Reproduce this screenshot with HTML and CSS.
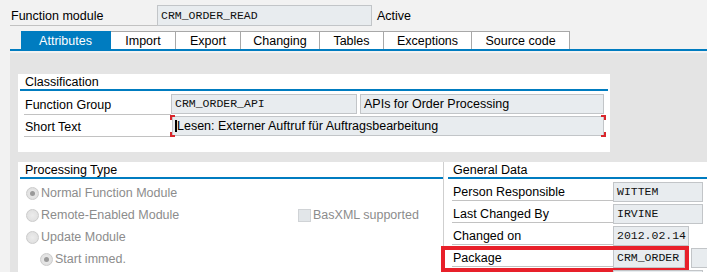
FILE: index.html
```html
<!DOCTYPE html>
<html lang="en">
<head>
    <meta charset="UTF-8">
    <title>Function Builder - Display CRM_ORDER_READ</title>
    <link rel="stylesheet" href="styles.css">
</head>
<body>
    <div class="header">
        <div class="head-label">Function module</div>
        <div class="field mono head-field">CRM_ORDER_READ</div>
        <div class="status">Active</div>
    </div>

    <div class="tab-buttons">
        <div class="tab-button active" style="width: 90px">Attributes</div>
        <div class="tab-button" style="width: 65px">Import</div>
        <div class="tab-button" style="width: 65px">Export</div>
        <div class="tab-button" style="width: 79px">Changing</div>
        <div class="tab-button" style="width: 64px">Tables</div>
        <div class="tab-button" style="width: 88px">Exceptions</div>
        <div class="tab-button" style="width: 98px">Source code</div>
    </div>

    <div class="panel">
        <div class="box classification">
            <div class="box-title">Classification</div>
            <div class="rows">
                <div class="row">
                    <div class="row-label">Function Group</div>
                    <div class="field mono fg-field">CRM_ORDER_API</div>
                    <div class="field fg-text">APIs for Order Processing</div>
                </div>
                <div class="row">
                    <div class="row-label">Short Text</div>
                    <div class="field short-field"><span class="caret"></span>Lesen: Externer Auftruf für Auftragsbearbeitung</div>
                </div>
            </div>
        </div>

        <div class="box lower">
            <div class="section processing">
                <div class="box-title">Processing Type</div>
                <div class="options">
                    <div class="option">
                        <span class="radio checked"></span>Normal Function Module
                    </div>
                    <div class="option">
                        <div class="option-main"><span class="radio"></span>Remote-Enabled Module</div>
                        <div class="check-item"><span class="checkbox"></span>BasXML supported</div>
                    </div>
                    <div class="option">
                        <span class="radio"></span>Update Module
                    </div>
                    <div class="option sub">
                        <span class="radio checked"></span>Start immed.
                    </div>
                </div>
            </div>

            <div class="section general">
                <div class="box-title">General Data</div>
                <div class="gd-rows">
                    <div class="gd-row">
                        <div class="gd-label">Person Responsible</div>
                        <div class="field mono" style="width: 90px">WITTEM</div>
                    </div>
                    <div class="gd-row">
                        <div class="gd-label">Last Changed By</div>
                        <div class="field mono" style="width: 90px">IRVINE</div>
                    </div>
                    <div class="gd-row">
                        <div class="gd-label">Changed on</div>
                        <div class="field mono" style="width: 76px">2012.02.14</div>
                    </div>
                    <div class="gd-row">
                        <div class="gd-label">Package</div>
                        <div class="field mono" style="width: 72px">CRM_ORDER</div>
                        <div class="field extra"></div>
                        <div class="highlight"></div>
                    </div>
                    <div class="gd-row">
                        <div class="gd-label"></div>
                        <div class="field mono" style="width: 90px"></div>
                    </div>
                </div>
            </div>
        </div>
    </div>
</body>
</html>
```

FILE: styles.css
```css
body {
    margin: 0;
    width: 707px;
    height: 272px;
    overflow: hidden;
    background-color: #f2f2f2;
    font-family: "Liberation Sans", Arial, sans-serif;
    font-size: 12.5px;
    color: #000;
}

/* input-like display fields */
.field {
    box-sizing: border-box;
    height: 20px;
    line-height: 18px;
    padding-left: 3px;
    background-color: #e8ecef;
    border: 1px solid #c2c5c8;
    white-space: nowrap;
    overflow: hidden;
}
.mono {
    font-family: "Liberation Mono", "Courier New", monospace;
    font-size: 11.5px;
    color: #111;
}

/* header */
.header {
    display: flex;
    padding: 5px 0 0 10px;
}
.head-label {
    box-sizing: border-box;
    width: 147px;
    height: 21px;
    line-height: 22px;
    padding-left: 1px;
    border-bottom: 1px solid #c2c2c2;
}
.head-field {
    width: 215px;
    height: 21px;
    line-height: 19px;
}
.status {
    margin-left: 5px;
    line-height: 22px;
}

/* tabs */
.tab-buttons {
    display: flex;
    margin: 4px 0 0 10px;
    padding-left: 11px;
    border-bottom: 2px solid #007cc0;
}
.tab-button {
    box-sizing: border-box;
    height: 18px;
    line-height: 18px;
    text-align: center;
    background-color: #fff;
    border-top: 1px solid #a8a8a8;
    border-right: 1px solid #a8a8a8;
}
.tab-button.active {
    background-color: #007cc0;
    border-color: #007cc0;
    color: #fff;
}

/* tab body */
.panel {
    margin: 2px 0 0 10px;
    padding: 21px 0 0 8px;
    height: 199px;
    background-color: #e4e4e4;
}
.box {
    background-color: #fff;
}
.box-title {
    height: 15px;
    line-height: 16px;
    padding-left: 5px;
    border-bottom: 2px solid #007cc0;
}

.classification {
    width: 592px;
    height: 78px;
    padding: 0 2px;
    box-sizing: border-box;
    margin-bottom: 10px;
}
.rows {
    padding: 2px 0 0 4px;
}
.row {
    display: flex;
    align-items: flex-start;
    height: 22px;
}
.row-label {
    box-sizing: border-box;
    width: 147px;
    height: 22px;
    padding: 4px 0 0 1px;
    line-height: 17px;
    border-bottom: 1px solid #c2c2c2;
}
.row .field {
    margin-top: 1px;
}
.fg-field {
    width: 186px;
}
.fg-text {
    width: 244px;
    margin-left: 3px;
}
.short-field {
    position: relative;
    width: 432px;
    margin-left: 1px;
    padding-left: 2px;
    overflow: visible;
}
/* red required-entry corner marks */
.short-field::before,
.short-field::after {
    content: "";
    position: absolute;
    top: -2px;
    bottom: -2px;
    width: 5px;
    background:
        linear-gradient(#d9262c, #d9262c) top / 100% 2px no-repeat,
        linear-gradient(#d9262c, #d9262c) bottom / 100% 2px no-repeat;
}
.short-field::before {
    left: -3px;
    background:
        linear-gradient(#d9262c, #d9262c) left top / 5px 2px no-repeat,
        linear-gradient(#d9262c, #d9262c) left top / 2px 5px no-repeat,
        linear-gradient(#d9262c, #d9262c) left bottom / 5px 2px no-repeat,
        linear-gradient(#d9262c, #d9262c) left bottom / 2px 5px no-repeat;
}
.short-field::after {
    right: -3px;
    background:
        linear-gradient(#d9262c, #d9262c) right top / 5px 2px no-repeat,
        linear-gradient(#d9262c, #d9262c) right top / 2px 5px no-repeat,
        linear-gradient(#d9262c, #d9262c) right bottom / 5px 2px no-repeat,
        linear-gradient(#d9262c, #d9262c) right bottom / 2px 5px no-repeat;
}
.caret {
    display: inline-block;
    width: 2px;
    height: 12px;
    vertical-align: -2px;
    background-color: #000;
}

/* lower box */
.lower {
    display: flex;
    height: 111px;
    overflow: hidden;
}
.section {
    padding-left: 2px;
}
.processing {
    flex: none;
    width: 423px;
    margin-right: 2px;
    border-right: 1px solid #cfcfcf;
}
.general {
    flex: 1;
    min-width: 0;
}

.options {
    padding-top: 3px;
    color: #8c8c8c;
}
.option {
    display: flex;
    align-items: center;
    height: 22px;
    padding-left: 6px;
}
.option.sub {
    padding-left: 20px;
}
.option-main {
    display: flex;
    align-items: center;
    width: 272px;
}
.radio {
    box-sizing: border-box;
    display: flex;
    align-items: center;
    justify-content: center;
    width: 13px;
    height: 13px;
    margin-right: 2px;
    border: 1px solid #cbcbcb;
    border-radius: 50%;
    background: radial-gradient(circle, #ececec 0, #dcdcdc 100%);
}
.radio.checked::after {
    content: "";
    width: 5px;
    height: 5px;
    border-radius: 50%;
    background-color: #9a9a9a;
}
.check-item {
    display: flex;
    align-items: center;
}
.checkbox {
    box-sizing: border-box;
    width: 13px;
    height: 13px;
    margin-right: 2px;
    background-color: #e2e6e9;
    border: 1px solid #d0d3d6;
}

.gd-rows {
    padding-left: 4px;
}
.gd-row {
    position: relative;
    display: flex;
    align-items: flex-start;
    height: 22px;
}
.gd-label {
    flex: none;
    box-sizing: border-box;
    width: 161px;
    height: 22px;
    padding: 5px 0 0 1px;
    line-height: 17px;
    border-bottom: 1px solid #c2c2c2;
}
.gd-row .field {
    flex: none;
    margin-top: 3px;
}
.field.extra {
    width: 40px;
    margin-left: 6px;
}
.highlight {
    position: absolute;
    left: -11px;
    top: 1px;
    width: 248px;
    height: 26px;
    box-sizing: border-box;
    border: 4px solid #e8202a;
}
```
